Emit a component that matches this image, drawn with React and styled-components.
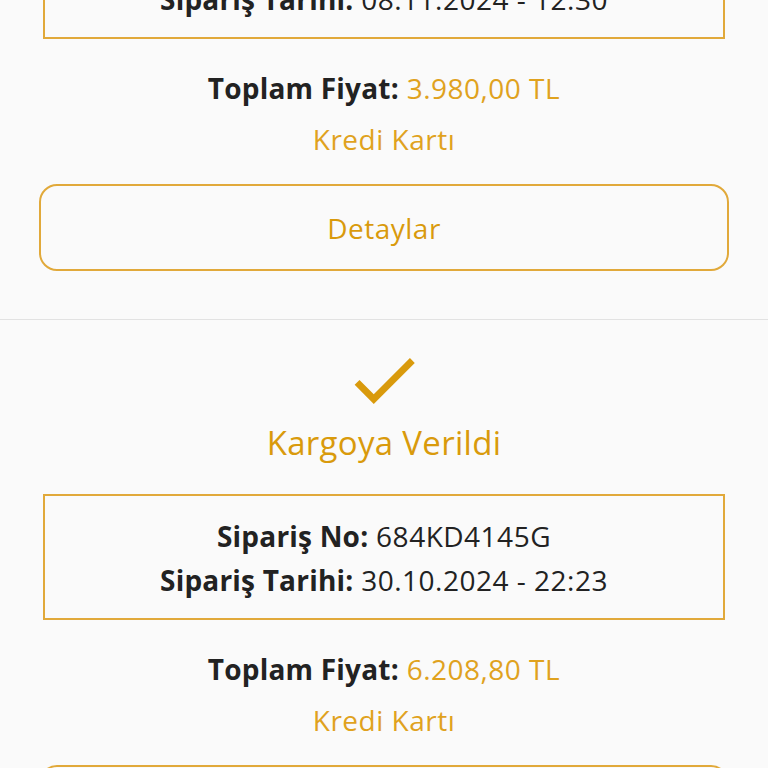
import React from 'react'
import styled, { createGlobalStyle } from 'styled-components'

const orders = [
  {
    status: 'Kargoya Verildi',
    no: '9A2KD7731B',
    date: '08.11.2024 - 12:30',
    total: '3.980,00 TL',
    payment: 'Kredi Kartı',
  },
  {
    status: 'Kargoya Verildi',
    no: '684KD4145G',
    date: '30.10.2024 - 22:23',
    total: '6.208,80 TL',
    payment: 'Kredi Kartı',
  },
  {
    status: 'Teslim Edildi',
    no: '512KD0988A',
    date: '21.10.2024 - 09:14',
    total: '1.249,90 TL',
    payment: 'Kredi Kartı',
  },
]

const CheckIcon = () => (
  <svg viewBox="0 0 24 24" width="82" height="82" fill="currentColor">
    <path d="M9 16.17L4.83 12l-1.42 1.41L9 19 21 7l-1.41-1.41z" />
  </svg>
)

const OrderCard = ({ order }) => (
  <Card>
    <Icon>
      <CheckIcon />
    </Icon>
    <Status>{order.status}</Status>
    <InfoBox>
      <InfoLine>
        <b>Sipariş No:</b> {order.no}
      </InfoLine>
      <InfoLine>
        <b>Sipariş Tarihi:</b> {order.date}
      </InfoLine>
    </InfoBox>
    <Total>
      <b>Toplam Fiyat:</b> <span>{order.total}</span>
    </Total>
    <Payment>{order.payment}</Payment>
    <DetailButton>Detaylar</DetailButton>
  </Card>
)

const App = () => {
  return (
    <>
      <GlobalStyle />
      <Page>
        <List>
          {orders.map((o) => (
            <OrderCard key={o.no} order={o} />
          ))}
        </List>
      </Page>
    </>
  )
}

export default App

const GlobalStyle = createGlobalStyle`
body{
  margin:0;
  background:#fafafa;
  font-family:"Open Sans","Noto Sans",sans-serif;
  color:#222;
}
`

const Page = styled.div`
width:768px;
height:768px;
overflow:hidden;
background:#fafafa;
`

// scrolled list: first card is partly above the viewport
const List = styled.div`
margin-top:-261px;
display:flex;
flex-direction:column;
`

const Card = styled.div`
display:flex;
flex-direction:column;
align-items:center;
padding:19px 39px 48px;
border-bottom:1px solid #e2e2e2;
`

const Icon = styled.div`
height:82px;
color:#d99a0c;
svg{ display:block; }
`

const Status = styled.div`
margin-top:2px;
font-size:33px;
line-height:40px;
letter-spacing:0.3px;
color:#d99a0c;
`

const InfoBox = styled.div`
align-self:stretch;
margin:31px 4px 0 4px;
border:2px solid #e1a93a;
padding:18px 0 16px;
display:flex;
flex-direction:column;
align-items:center;
`

const InfoLine = styled.div`
font-size:28px;
line-height:44px;
letter-spacing:0.5px;
color:#222;
b{ font-weight:700; letter-spacing:0.2px; }
`

const Total = styled.div`
margin-top:29px;
font-size:28px;
line-height:40px;
letter-spacing:0.5px;
b{ font-weight:700; color:#222; letter-spacing:0.2px; }
span{ color:#e0a21e; }
`

const Payment = styled.div`
margin-top:11px;
font-size:28px;
line-height:40px;
letter-spacing:0.5px;
color:#e0a21e;
`

const DetailButton = styled.button`
align-self:stretch;
margin-top:25px;
height:87px;
border:2px solid #e1a93a;
border-radius:18px;
background:transparent;
font-family:inherit;
font-size:28px;
font-weight:500;
letter-spacing:0.5px;
color:#d99a0c;
cursor:pointer;
`
